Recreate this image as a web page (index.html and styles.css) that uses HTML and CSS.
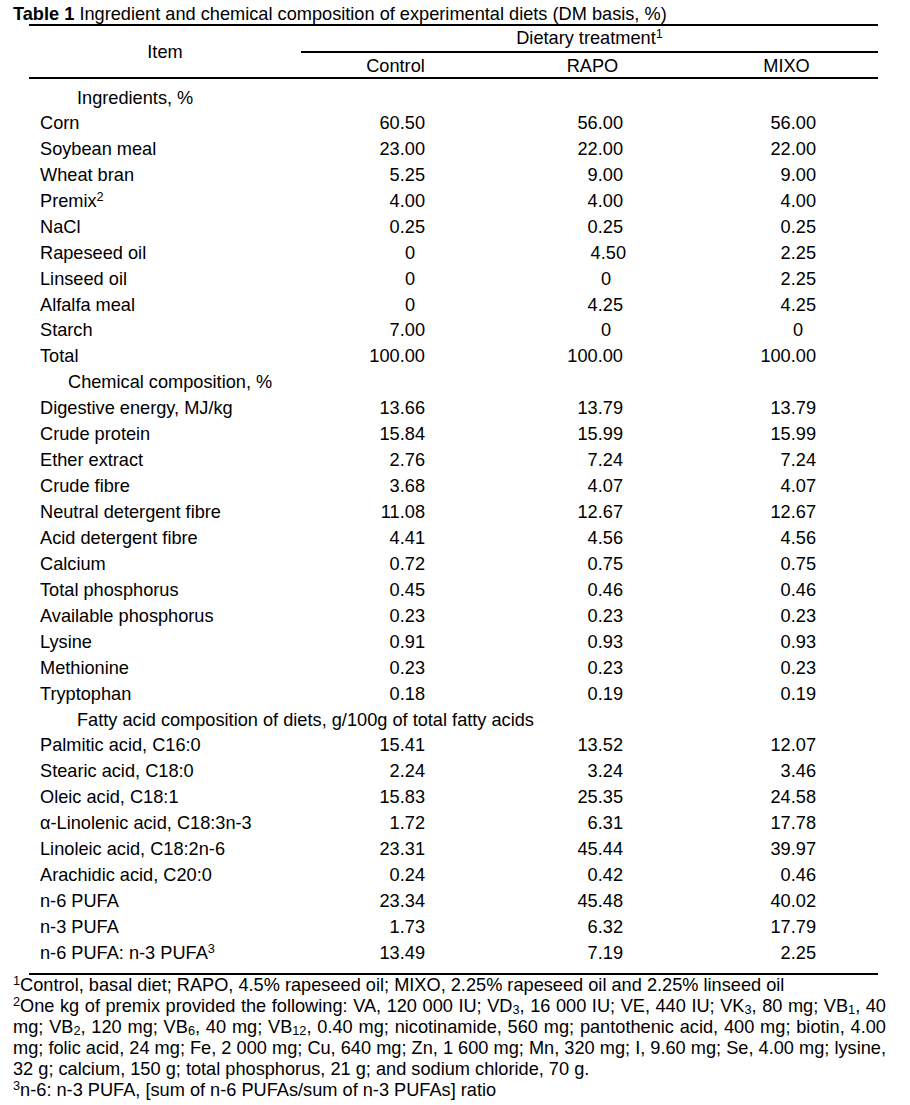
FILE: index.html
```html
<!DOCTYPE html>
<html lang="en">
<head>
<meta charset="utf-8">
<title>Table 1</title>
<link rel="stylesheet" href="styles.css">
</head>
<body>
<div class="page">
  <p class="caption"><b>Table 1</b> Ingredient and chemical composition of experimental diets (DM basis, %)</p>
  <table class="diet">
    <colgroup>
      <col class="c-item">
      <col class="c-ctrl">
      <col class="c-rapo">
      <col class="c-mixo">
    </colgroup>
    <thead>
      <tr class="h1">
        <th rowspan="2" class="item">Item</th>
        <th colspan="3" class="group">Dietary treatment<sup>1</sup></th>
      </tr>
      <tr class="h2">
        <th>Control</th>
        <th>RAPO</th>
        <th>MIXO</th>
      </tr>
    </thead>
    <tbody>
      <tr class="sec first"><td colspan="4" class="s-ing">Ingredients, %</td></tr>
      <tr><td>Corn</td><td>60.50</td><td>56.00</td><td>56.00</td></tr>
      <tr><td>Soybean meal</td><td>23.00</td><td>22.00</td><td>22.00</td></tr>
      <tr><td>Wheat bran</td><td>5.25</td><td>9.00</td><td>9.00</td></tr>
      <tr><td>Premix<sup>2</sup></td><td>4.00</td><td>4.00</td><td>4.00</td></tr>
      <tr><td>NaCl</td><td>0.25</td><td>0.25</td><td>0.25</td></tr>
      <tr><td>Rapeseed oil</td><td class="z">0</td><td class="sh">4.50</td><td>2.25</td></tr>
      <tr><td>Linseed oil</td><td class="z">0</td><td class="z">0</td><td>2.25</td></tr>
      <tr><td>Alfalfa meal</td><td class="z">0</td><td>4.25</td><td>4.25</td></tr>
      <tr><td>Starch</td><td>7.00</td><td class="z">0</td><td class="z">0</td></tr>
      <tr><td>Total</td><td>100.00</td><td>100.00</td><td>100.00</td></tr>
      <tr class="sec"><td colspan="4" class="s-chem">Chemical composition, %</td></tr>
      <tr><td>Digestive energy, MJ/kg</td><td>13.66</td><td>13.79</td><td>13.79</td></tr>
      <tr><td>Crude protein</td><td>15.84</td><td>15.99</td><td>15.99</td></tr>
      <tr><td>Ether extract</td><td>2.76</td><td>7.24</td><td>7.24</td></tr>
      <tr><td>Crude fibre</td><td>3.68</td><td>4.07</td><td>4.07</td></tr>
      <tr><td>Neutral detergent fibre</td><td>11.08</td><td>12.67</td><td>12.67</td></tr>
      <tr><td>Acid detergent fibre</td><td>4.41</td><td>4.56</td><td>4.56</td></tr>
      <tr><td>Calcium</td><td>0.72</td><td>0.75</td><td>0.75</td></tr>
      <tr><td>Total phosphorus</td><td>0.45</td><td>0.46</td><td>0.46</td></tr>
      <tr><td>Available phosphorus</td><td>0.23</td><td>0.23</td><td>0.23</td></tr>
      <tr><td>Lysine</td><td>0.91</td><td>0.93</td><td>0.93</td></tr>
      <tr><td>Methionine</td><td>0.23</td><td>0.23</td><td>0.23</td></tr>
      <tr><td>Tryptophan</td><td>0.18</td><td>0.19</td><td>0.19</td></tr>
      <tr class="sec"><td colspan="4" class="s-fat">Fatty acid composition of diets, g/100g of total fatty acids</td></tr>
      <tr><td>Palmitic acid, C16:0</td><td>15.41</td><td>13.52</td><td>12.07</td></tr>
      <tr><td>Stearic acid, C18:0</td><td>2.24</td><td>3.24</td><td>3.46</td></tr>
      <tr><td>Oleic acid, C18:1</td><td>15.83</td><td>25.35</td><td>24.58</td></tr>
      <tr><td>α-Linolenic acid, C18:3n-3</td><td>1.72</td><td>6.31</td><td>17.78</td></tr>
      <tr><td>Linoleic acid, C18:2n-6</td><td>23.31</td><td>45.44</td><td>39.97</td></tr>
      <tr><td>Arachidic acid, C20:0</td><td>0.24</td><td>0.42</td><td>0.46</td></tr>
      <tr><td>n-6 PUFA</td><td>23.34</td><td>45.48</td><td>40.02</td></tr>
      <tr><td>n-3 PUFA</td><td>1.73</td><td>6.32</td><td>17.79</td></tr>
      <tr class="last"><td>n-6 PUFA: n-3 PUFA<sup>3</sup></td><td>13.49</td><td>7.19</td><td>2.25</td></tr>
    </tbody>
  </table>
  <div class="notes">
    <p class="note"><span class="ln"><sup>1</sup>Control, basal diet; RAPO, 4.5% rapeseed oil; MIXO, 2.25% rapeseed oil and 2.25% linseed oil</span></p>
    <p class="note">
      <span class="ln j"><sup>2</sup>One kg of premix provided the following: VA, 120 000 IU; VD<sub>3</sub>, 16 000 IU; VE, 440 IU; VK<sub>3</sub>, 80 mg; VB<sub>1</sub>, 40</span>
      <span class="ln j">mg; VB<sub>2</sub>, 120 mg; VB<sub>6</sub>, 40 mg; VB<sub>12</sub>, 0.40 mg; nicotinamide, 560 mg; pantothenic acid, 400 mg; biotin, 4.00</span>
      <span class="ln j">mg; folic acid, 24 mg; Fe, 2 000 mg; Cu, 640 mg; Zn, 1 600 mg; Mn, 320 mg; I, 9.60 mg; Se, 4.00 mg; lysine,</span>
      <span class="ln">32 g; calcium, 150 g; total phosphorus, 21 g; and sodium chloride, 70 g.</span>
    </p>
    <p class="note"><span class="ln"><sup>3</sup>n-6: n-3 PUFA, [sum of n-6 PUFAs/sum of n-3 PUFAs] ratio</span></p>
  </div>
</div>
</body>
</html>
```

FILE: styles.css
```css
html, body {
  margin: 0;
  padding: 0;
  background: #ffffff;
}

body {
  font-family: "Liberation Sans", Arial, sans-serif;
  font-size: 18.2px;
  color: #000000;
}

.page {
  width: 910px;
  padding: 5px 0 0 13px;
  box-sizing: border-box;
}

.caption {
  margin: 0;
  line-height: 19px;
  white-space: nowrap;
}

.caption b {
  font-weight: bold;
}

sup {
  font-size: 0.7em;
  line-height: 0;
  vertical-align: 0.5em;
}

sub {
  font-size: 0.7em;
  line-height: 0;
  vertical-align: -0.15em;
}

.diet {
  margin-left: 16px;
  width: 849px;
  border-collapse: separate;
  border-spacing: 0;
  border-top: 2px solid #000;
  border-bottom: 2px solid #000;
  table-layout: fixed;
}

.c-item { width: 272px; }
.c-ctrl { width: 189px; }
.c-rapo { width: 205px; }
.c-mixo { width: 183px; }

.diet th {
  font-weight: normal;
  text-align: center;
  line-height: 20px;
  vertical-align: middle;
  border-bottom: 2px solid #000;
}

.diet .h1 th.group {
  padding: 2px 0 3px;
}

.diet .h2 th {
  padding: 3px 0 1px;
}

.diet th.item {
  padding: 0;
}

.diet tbody tr {
  height: 25.95px;
}

.diet td {
  padding: 0;
  line-height: 20px;
  vertical-align: middle;
  white-space: nowrap;
}

.diet td:first-child {
  padding-left: 11px;
  text-align: left;
}

.diet td:nth-child(2) { text-align: right; padding-right: 65px; }
.diet td:nth-child(3) { text-align: right; padding-right: 72px; }
.diet td:nth-child(4) { text-align: right; padding-right: 62px; }

.diet td.z:nth-child(2) { padding-right: 75px; }
.diet td.z:nth-child(3) { padding-right: 84px; }
.diet td.z:nth-child(4) { padding-right: 75px; }
.diet td.sh:nth-child(3) { padding-right: 69px; }

.diet tr.sec td {
  text-align: left;
}

.diet td.s-ing { padding-left: 48px; }
.diet td.s-chem { padding-left: 39px; }
.diet td.s-fat { padding-left: 48px; }

.diet tbody tr.first {
  height: 31px;
}

.diet tr.first td {
  padding-top: 7px;
}

.diet tbody tr.last {
  height: 33px;
}

.diet tr.last td {
  padding-bottom: 7px;
}

.notes {
  width: 873px;
}

.note {
  margin: 0;
  line-height: 21px;
}

.ln {
  display: block;
  text-align: left;
  white-space: nowrap;
}

.ln.j {
  white-space: normal;
  word-spacing: -2px;
  text-align: justify;
  text-align-last: justify;
}
```
